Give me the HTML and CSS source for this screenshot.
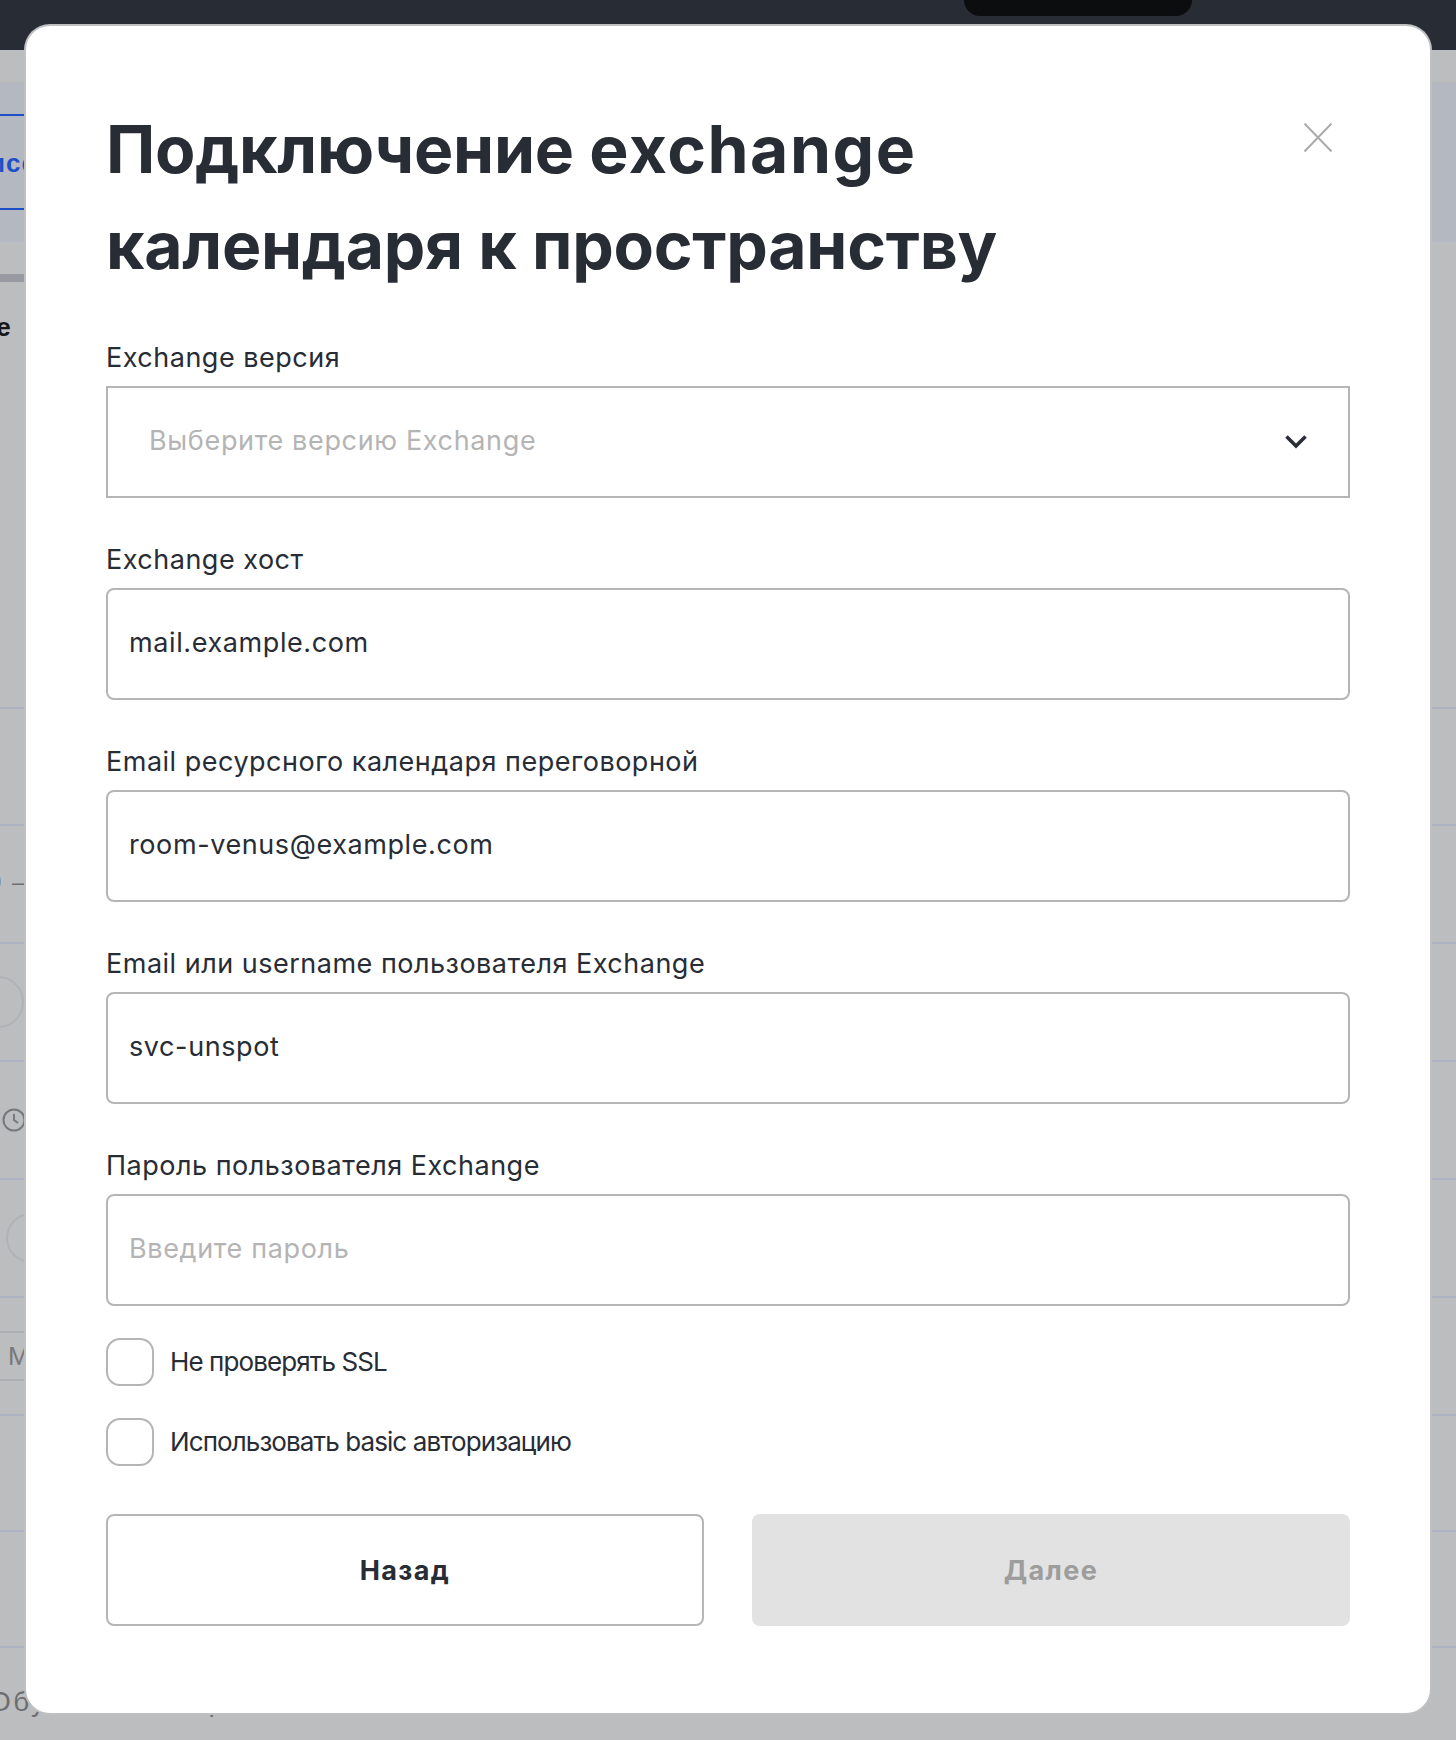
FILE: index.html
```html
<!DOCTYPE html>
<html lang="ru">
<head>
<meta charset="utf-8">
<title>Подключение exchange календаря</title>
<link rel="stylesheet" href="styles.css">
</head>
<body>
<div class="page">
  <header class="topbar"><div class="notch"></div></header>
  <div class="nav-band"><span class="nav-line l1"></span><span class="nav-tab">Сервисе</span><span class="nav-line l2"></span></div>
  <div class="gray-bar"></div>
  <div class="page-title">Exchange</div>
  <div class="rows" aria-hidden="true">
    <div class="row"></div><div class="row row-117"></div><div class="row"></div><div class="row"></div><div class="row"></div><div class="row"></div><div class="row"></div><div class="row row-116"></div><div class="row row-116"></div>
  </div>
  <span class="bg-dash">0 —</span>
  <span class="bg-circle c1"></span>
  <span class="bg-circle c2"></span>
  <svg class="bg-clock" viewBox="0 0 24 24"><circle cx="12" cy="12" r="10.5"/><path d="M12 6v6l4 3"/></svg>
  <div class="bg-m"><span>М</span></div>
  <div class="bg-foot">Обучение и справка, </div>
  <main class="modal">
    <div class="modal-head">
      <h1 class="title">Подключение <span class="title-latin">exchange</span> календаря к пространству</h1>
      <svg class="close" viewBox="0 0 28 29"><path d="M0.5 0.5 27.5 28.5M27.5 0.5 0.5 28.5"/></svg>
    </div>
    <form class="form">
      <div class="field">
        <label class="label">Exchange версия</label>
        <div class="control select"><span class="ph ph-select">Выберите версию Exchange</span>
          <svg class="chev" viewBox="0 0 24 15"><path d="M2.5 2.5 12 12 21.5 2.5"/></svg>
        </div>
      </div>
      <div class="field">
        <label class="label">Exchange хост</label>
        <div class="control"><span class="val">mail.example.com</span></div>
      </div>
      <div class="field">
        <label class="label">Email ресурсного календаря переговорной</label>
        <div class="control"><span class="val">room-venus@example.com</span></div>
      </div>
      <div class="field">
        <label class="label">Email или username пользователя Exchange</label>
        <div class="control"><span class="val">svc-unspot</span></div>
      </div>
      <div class="field">
        <label class="label">Пароль пользователя Exchange</label>
        <div class="control"><span class="ph">Введите пароль</span></div>
      </div>
      <div class="checks">
        <div class="check"><span class="box"></span><span class="check-text">Не проверять SSL</span></div>
        <div class="check"><span class="box"></span><span class="check-text">Использовать basic авторизацию</span></div>
      </div>
      <div class="actions">
        <button type="button" class="btn btn-back">Назад</button>
        <button type="button" class="btn btn-next">Далее</button>
      </div>
    </form>
  </main>
</div>
</body>
</html>
```
FILE: styles.css
```css
* { box-sizing: border-box; }
html, body { margin: 0; padding: 0; }
body { width: 1456px; height: 1740px; overflow: hidden; background: #bcbdbf; font-family: "Inter", "Liberation Sans", sans-serif; color: #282c35; }
.page { position: relative; width: 1456px; height: 1740px; overflow: hidden; background: #bcbdbf; }
.topbar { height: 50px; background: #282c35; position: relative; }
.notch { position: absolute; left: 964px; top: 0; width: 228px; height: 16px; background: #0c0d0f; border-radius: 0 0 16px 16px; }
.nav-band { position: absolute; left: 0; right: 0; top: 82px; height: 160px; background: #b4b8c1; }
.nav-line { position: absolute; left: 0; width: 40px; height: 2px; background: #1e4fc8; }
.nav-line.l1 { top: 32px; }
.nav-line.l2 { top: 126px; }
.nav-tab { position: absolute; left: -80px; top: 66px; font: bold 26px/30px "Liberation Sans", sans-serif; letter-spacing: 1px; color: #1e4fc8; white-space: nowrap; }
.gray-bar { position: absolute; left: 0; width: 24px; top: 274px; height: 8px; background: #9a9ba2; }
.page-title { position: absolute; left: -112px; top: 312px; font: bold 26px/30px "Liberation Sans", sans-serif; color: #16171a; }
.rows { position: absolute; left: 0; right: 0; top: 591px; }
.row { height: 118px; border-bottom: 2px solid #acb2c1; }
.row-117 { height: 117px; }
.row-116 { height: 116px; }
.bg-dash { position: absolute; left: -12px; top: 868px; font: 24px/28px "Liberation Sans", sans-serif; word-spacing: 4px; color: #6d6e72; white-space: nowrap; }
.bg-circle { position: absolute; border-radius: 50%; border: 2px solid #b1b2b5; }
.bg-circle.c1 { left: -28px; top: 976px; width: 52px; height: 52px; }
.bg-circle.c2 { left: 6px; top: 1213px; width: 50px; height: 50px; }
.bg-clock { position: absolute; left: 2px; top: 1108px; width: 24px; height: 24px; fill: none; stroke: #77787b; stroke-width: 2; }
.bg-m { position: absolute; left: 0; width: 40px; top: 1331px; height: 50px; border-top: 2px solid #aeafb2; border-bottom: 2px solid #aeafb2; padding-left: 8px; font: 26px/46px "Liberation Sans", sans-serif; color: #77787b; }
.bg-foot { position: absolute; left: -11px; top: 1684px; font: 28px/36px "Liberation Sans", sans-serif; letter-spacing: 2.4px; color: #6d6e72; white-space: nowrap; }
.modal { position: absolute; left: 26px; top: 26px; width: 1404px; height: 1687px; background: #fff; border-radius: 24px; box-shadow: 0 0 0 2px #bfc0c2; padding: 75px 80px 0 80px; }
.modal-head { position: relative; height: 289px; }
.title { margin: 0; width: 900px; font: 700 66px/96px "Inter", "Liberation Sans", sans-serif; letter-spacing: -0.25px; color: #282c35; }
.title-latin { letter-spacing: 1.5px; }
.close { position: absolute; right: 18px; top: 22px; width: 28px; height: 29px; fill: none; stroke: #aaaaaa; stroke-width: 2; }
.form { display: flex; flex-direction: column; gap: 30px; margin-top: -62px; }
.field { display: flex; flex-direction: column; height: 172px; }
.label { font-size: 27px; line-height: 60px; height: 58px; color: #282c35; font-weight: 400; letter-spacing: 0.5px; }
.control { height: 112px; flex: none; border: 2px solid #b5b5b5; border-radius: 8px; display: flex; align-items: center; padding: 0 20px 0 21px; font-size: 27px; }
.select { border-radius: 0; justify-content: space-between; padding: 0 40px 0 41px; }
.val { color: #282c35; letter-spacing: 0.6px; margin-top: -3px; }
.ph { color: #b4b4b4; letter-spacing: 0.65px; margin-top: -3px; }
.chev { width: 24px; height: 15px; fill: none; stroke: #282c35; stroke-width: 3.5; margin-top: -2px; }
.checks { display: flex; flex-direction: column; gap: 33px; }
.check { display: flex; align-items: center; gap: 16px; height: 47px; }
.box { width: 48px; height: 48px; border: 2px solid #b5b5b5; border-radius: 14px; flex: none; }
.check-text { font-size: 26px; letter-spacing: -0.9px; color: #282c35; margin-top: -1px; }
.actions { display: grid; grid-template-columns: 1fr 1fr; gap: 48px; margin-top: 19px; }
.btn { height: 112px; border-radius: 8px; font: 700 27px "Inter", "Liberation Sans", sans-serif; letter-spacing: 1.4px; }
.btn-back { background: #fff; border: 2px solid #b5b5b5; color: #282c35; }
.btn-next { background: #e2e2e2; border: 0; color: #9d9d9d; }
```
